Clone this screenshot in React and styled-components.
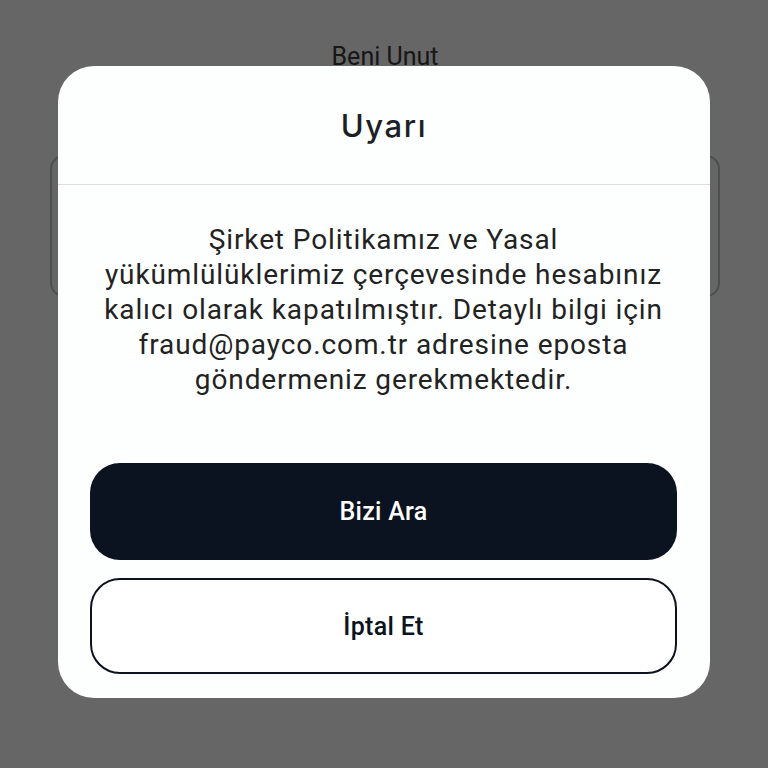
import React from 'react'
import styled, { createGlobalStyle } from 'styled-components'

const GlobalStyle = createGlobalStyle`
    html, body {
        margin: 0;
        padding: 0;
        background: #ffffff;
    }
    * {
        box-sizing: border-box;
    }
`

function App() {
    return (
        <>
            <GlobalStyle />
            <Screen>
                <Page>
                    <ForgetLink>Beni Unut</ForgetLink>
                    <InputBox />
                </Page>
                <Overlay>
                    <Modal>
                        <Header>
                            <Title>Uyarı</Title>
                        </Header>
                        <Body>
                            <Message>
                                Şirket Politikamız ve Yasal<br />
                                yükümlülüklerimiz çerçevesinde hesabınız<br />
                                kalıcı olarak kapatılmıştır. Detaylı bilgi için<br />
                                fraud@payco.com.tr adresine eposta<br />
                                göndermeniz gerekmektedir.
                            </Message>
                            <Actions>
                                <Button>Bizi Ara</Button>
                                <Button outline>İptal Et</Button>
                            </Actions>
                        </Body>
                    </Modal>
                </Overlay>
            </Screen>
        </>
    )
}

export default App

const Screen = styled.div`
    position: relative;
    width: 100vw;
    height: 100vh;
    overflow: hidden;
    font-family: Roboto, "Noto Sans", sans-serif;
`
const Page = styled.div`
    display: flex;
    flex-direction: column;
    align-items: center;
    padding: 41px 48px 0 50px;
`
const ForgetLink = styled.div`
    font-size: 25px;
    line-height: 32px;
    color: #3a3a3a;
    margin-bottom: 82px;
`
const InputBox = styled.div`
    width: 100%;
    height: 142px;
    border: 2px solid #c4c4c4;
    border-radius: 14px;
`
const Overlay = styled.div`
    position: absolute;
    inset: 0;
    background: rgba(0, 0, 0, 0.6);
    display: flex;
    align-items: center;
    justify-content: center;
`
const Modal = styled.div`
    width: 652px;
    background: #fdfefe;
    border-radius: 36px;
    overflow: hidden;
    margin-top: -4px;
`
const Header = styled.div`
    height: 119px;
    display: flex;
    align-items: center;
    justify-content: center;
    border-bottom: 1.5px solid #dedede;
`
const Title = styled.h2`
    margin: 0;
    font-family: Inter, "Open Sans", sans-serif;
    font-weight: 500;
    font-size: 31px;
    letter-spacing: 1.6px;
    color: #1c1f24;
`
const Body = styled.div`
    padding: 37px 33px 24px 32px;
`
const Message = styled.p`
    margin: 0 0 66px;
    text-align: center;
    font-size: 28px;
    line-height: 35px;
    letter-spacing: 0.9px;
    color: #222222;
`
const Actions = styled.div`
    display: flex;
    flex-direction: column;
    gap: 18px;
`
const Button = styled.button`
    width: 100%;
    height: ${p => (p.outline ? '96px' : '97px')};
    border-radius: 30px;
    font-family: Roboto, sans-serif;
    font-weight: 500;
    font-size: 25px;
    letter-spacing: 0.3px;
    cursor: pointer;
    background: ${p => (p.outline ? '#ffffff' : '#0b1220')};
    color: ${p => (p.outline ? '#0b1220' : '#ffffff')};
    border: ${p => (p.outline ? '2px solid #0b1220' : 'none')};
`
